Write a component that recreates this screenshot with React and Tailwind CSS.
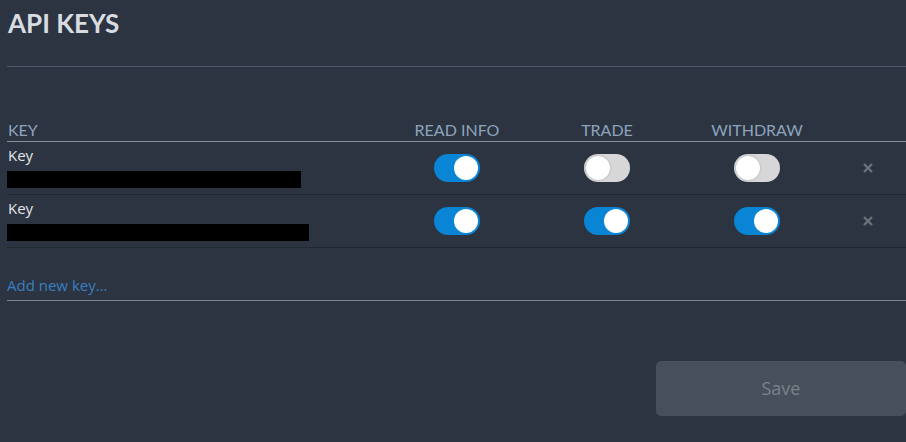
const keys = [
  { id: 1, bar: 294, read: true, trade: false, withdraw: false },
  { id: 2, bar: 302, read: true, trade: true, withdraw: true },
];

function Toggle({ on }) {
  return (
    <div
      className={`relative w-[46px] h-[28px] rounded-full ${on ? 'bg-[#0a84d4]' : 'bg-[#d7d7d7]'}`}
    >
      <div
        className={`absolute top-[2px] w-[24px] h-[24px] rounded-full bg-white ${
          on ? 'right-[2px]' : 'left-[2px] shadow-[0_0_2px_rgba(0,0,0,0.25)]'
        }`}
      />
    </div>
  );
}

function RemoveIcon() {
  return (
    <svg width="10" height="10" viewBox="0 0 10 10">
      <path d="M1 1 L9 9 M9 1 L1 9" stroke="#6d727a" strokeWidth="2.4" strokeLinecap="butt" />
    </svg>
  );
}

export default function App() {
  return (
    <div className="w-[906px] h-[442px] overflow-hidden bg-[#2b3440] pl-[7px]">
      {/* Title */}
      <h1 className="pt-[8px] pl-[1px] text-[26px] leading-[31px] font-bold text-[#d8dce2] font-['Lato',sans-serif]">
        API KEYS
      </h1>
      <div className="mt-[27px] h-px bg-[#4f5866]" />

      {/* Table */}
      <div className="mt-[53px] grid grid-cols-[375px_150px_150px_150px_1fr] font-['Lato',sans-serif] text-[16px] leading-[19px] text-[#8ea3bd] border-b border-[#8a8e94] pb-[2px]">
        <div className="pl-[1px]">KEY</div>
        <div className="text-center">READ INFO</div>
        <div className="text-center">TRADE</div>
        <div className="text-center">WITHDRAW</div>
        <div />
      </div>

      {keys.map((k) => (
        <div
          key={k.id}
          className="grid grid-cols-[375px_150px_150px_150px_1fr] items-center border-b border-[#1f2731]"
        >
          <div className="pt-[3px] pb-[6px] font-['Open_Sans',sans-serif]">
            <div className="pl-[1px] text-[15px] leading-[20px] text-[#e3e6ea]">Key</div>
            <div className="mt-[6px] h-[17px] bg-black" style={{ width: k.bar }} />
          </div>
          <div className="flex justify-center">
            <Toggle on={k.read} />
          </div>
          <div className="flex justify-center">
            <Toggle on={k.trade} />
          </div>
          <div className="flex justify-center">
            <Toggle on={k.withdraw} />
          </div>
          <div className="flex justify-center pr-[3px]">
            <RemoveIcon />
          </div>
        </div>
      ))}

      {/* Add new key */}
      <div className="mt-[27px] pb-[5px] border-b border-[#7f8389] font-['Open_Sans',sans-serif] text-[15px] leading-[20px] text-[#3a7fc2]">
        Add new key...
      </div>

      {/* Save */}
      <div className="mt-[60px] flex justify-end">
        <button className="w-[250px] h-[55px] rounded-[5px] bg-[#474f5a] text-[#7a828d] text-[18px] font-['Open_Sans',sans-serif]">
          Save
        </button>
      </div>
    </div>
  );
}
